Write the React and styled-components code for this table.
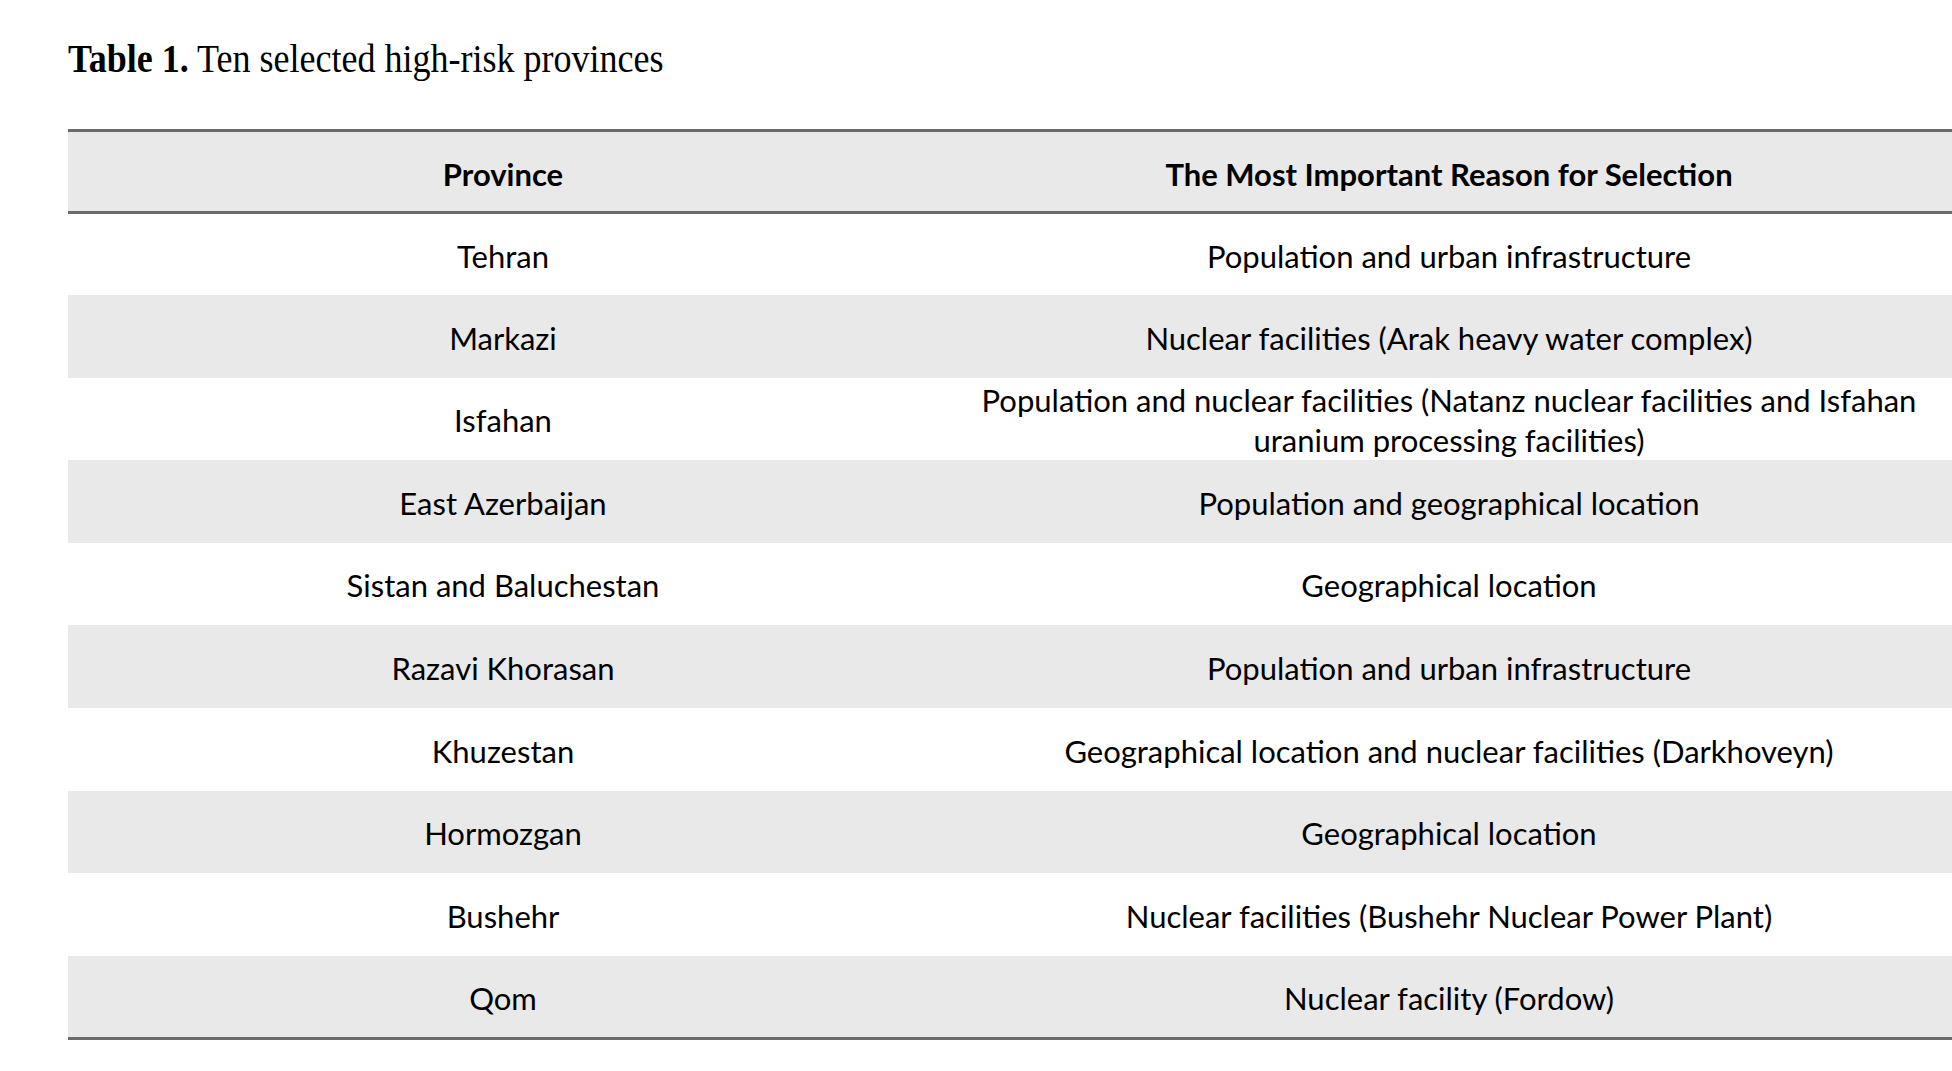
import React from "react";
import styled, { createGlobalStyle } from "styled-components";

const rows = [
  ["Tehran", "Population and urban infrastructure"],
  ["Markazi", "Nuclear facilities (Arak heavy water complex)"],
  [
    "Isfahan",
    "Population and nuclear facilities (Natanz nuclear facilities and Isfahan uranium processing facilities)",
  ],
  ["East Azerbaijan", "Population and geographical location"],
  ["Sistan and Baluchestan", "Geographical location"],
  ["Razavi Khorasan", "Population and urban infrastructure"],
  ["Khuzestan", "Geographical location and nuclear facilities (Darkhoveyn)"],
  ["Hormozgan", "Geographical location"],
  ["Bushehr", "Nuclear facilities (Bushehr Nuclear Power Plant)"],
  ["Qom", "Nuclear facility (Fordow)"],
];

const GlobalStyle = createGlobalStyle`
  html, body {
    margin: 0;
    padding: 0;
    background: #ffffff;
    overflow: hidden;
  }
`;

const Page = styled.div`
  padding: 39px 0 0 68px;
  width: 1892px;
`;

const Caption = styled.div`
  font-family: "Liberation Serif", "Times New Roman", serif;
  font-size: 40px;
  line-height: 40px;
  color: #000;
  transform: scaleX(0.9);
  transform-origin: left center;
  white-space: nowrap;
  margin-bottom: 50px;

  b {
    font-weight: 700;
  }
`;

const Table = styled.table`
  width: 1892px;
  border-collapse: collapse;
  table-layout: fixed;
  font-family: Lato, "Noto Sans", sans-serif;
  font-size: 31px;
  color: #000;
  border-top: 3px solid #6b6b6b;
  border-bottom: 3px solid #6b6b6b;
`;

const HeadRow = styled.tr`
  background: #e9e9e9;
  border-bottom: 3px solid #6b6b6b;
`;

const HeadCell = styled.th`
  height: 82px;
  padding: 4px 36px 0;
  box-sizing: border-box;
  font-weight: 700;
  text-align: center;
  vertical-align: middle;
`;

const Row = styled.tr`
  background: ${(p) => (p.$shaded ? "#e9e9e9" : "#ffffff")};
`;

const Cell = styled.td`
  height: 82.6px;
  padding: 2.6px 36px 0;
  box-sizing: border-box;
  text-align: center;
  vertical-align: middle;
  line-height: 40px;
`;

const App = () => (
  <Page>
    <GlobalStyle />
    <Caption>
      <b>Table 1.</b> Ten selected high-risk provinces
    </Caption>
    <Table>
      <colgroup>
        <col style={{ width: 870 }} />
        <col style={{ width: 1022 }} />
      </colgroup>
      <thead>
        <HeadRow>
          <HeadCell>Province</HeadCell>
          <HeadCell>The Most Important Reason for Selection</HeadCell>
        </HeadRow>
      </thead>
      <tbody>
        {rows.map(([province, reason], i) => (
          <Row key={province} $shaded={i % 2 === 1}>
            <Cell>{province}</Cell>
            <Cell>{reason}</Cell>
          </Row>
        ))}
      </tbody>
    </Table>
  </Page>
);

export default App;
